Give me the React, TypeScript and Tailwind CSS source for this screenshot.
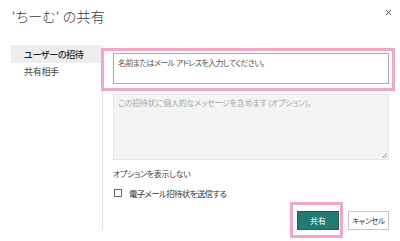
import { X } from "lucide-react";

const jp = "font-['Meiryo_UI','Noto_Sans_CJK_JP',sans-serif] [font-feature-settings:'palt']";

export default function App() {
  return (
    <div className={`relative w-[400px] h-[241px] bg-white text-[#333] overflow-hidden ${jp}`}>
      {/* header */}
      <div className="flex items-center justify-between pl-[12px] pr-[7px] h-[32px]">
        <h1 className="text-[14px] leading-none text-[#3a3a3a] font-light tracking-[0.2px]">'ちーむ' の共有</h1>
        <X className="self-start mt-[8px] w-[9px] h-[9px] text-[#333]" strokeWidth={2.2} />
      </div>

      <div className="flex mt-[13px]">
        {/* left nav */}
        <nav className="w-[90px] ml-[11px] shrink-0 flex flex-col text-[9px] leading-none">
          <div className="h-[18px] bg-[#eeeeee] flex items-center pl-[13px] text-[#222] font-medium tracking-[-0.3px]">ユーザーの招待</div>
          <div className="h-[17px] flex items-center pl-[13px] text-[#444] tracking-[-0.3px]">共有相手</div>
        </nav>

        {/* content */}
        <div className="ml-[1px] border-l border-[#e3e3e3] pl-[10px] w-[287px] h-[185px] flex flex-col">
          <div className="mt-[8px] h-[31px] border border-[#ababab] bg-white px-[4px] pt-[5px] text-[8px] leading-none text-[#555] tracking-[-0.6px]">
            名前またはメール アドレスを入力してください。
          </div>
          <div className="relative mt-[10px] h-[66px] border border-[#e6e6e6] bg-[#f4f4f4] px-[4px] pt-[4px] text-[8px] leading-none text-[#a6a6a6] tracking-[-0.2px]">
            この招待状に個人的なメッセージを含めます (オプション)。
            <svg className="absolute right-[1px] bottom-[1px]" width="6" height="6" viewBox="0 0 6 6">
              <path d="M1 6 L6 1 M3.5 6 L6 3.5" stroke="#888" strokeWidth="0.8" />
            </svg>
          </div>
          <div className="mt-[10px] text-[8px] leading-none text-[#444] tracking-[-0.3px]">オプションを表示しない</div>
          <label className="mt-[11px] flex items-center gap-[7px] text-[8.5px] leading-none text-[#333] tracking-[-0.7px]">
            <span className="ml-[1px] w-[8px] h-[8px] border border-[#666] bg-white" />
            電子メール招待状を送信する
          </label>
          <div className="mt-[14px] flex justify-end gap-[9px]">
            <button className="w-[42px] h-[19px] bg-[#237a72] border border-[#1d5f59] text-white text-[8px] leading-none">共有</button>
            <button className="w-[41px] h-[19px] bg-white border border-[#c6c6c6] text-[#333] text-[7.5px] leading-none tracking-[-0.3px]">キャンセル</button>
          </div>
        </div>
      </div>

      {/* pink annotation boxes */}
      <div className="absolute left-[101px] top-[48px] w-[294px] h-[43px] border-[3px] border-[#f2a7c7] pointer-events-none" />
      <div className="absolute left-[290px] top-[202px] w-[53px] h-[36px] border-[3px] border-[#f2a7c7] pointer-events-none" />
    </div>
  );
}
